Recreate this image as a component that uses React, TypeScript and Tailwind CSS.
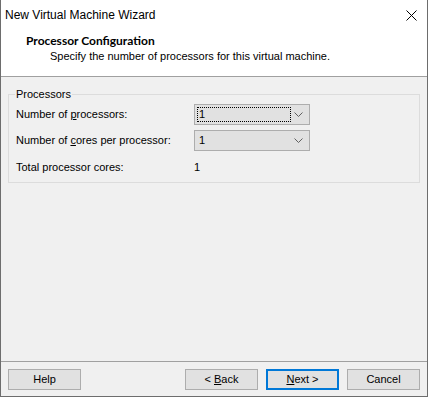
import React from 'react';

function Chevron() {
  return (
    <svg width="9" height="5" viewBox="0 0 9 5" className="text-[#606060]">
      <path d="M0.5 0.5 L4.5 4.5 L8.5 0.5" fill="none" stroke="currentColor" strokeWidth="1" />
    </svg>
  );
}

function Combo({ value, focused }: { value: string; focused?: boolean }) {
  return (
    <div className="flex h-[21px] w-[116px] items-center justify-between border border-[#adadad] bg-[#e1e1e1] pl-[2px] pr-[6px]">
      <div
        className={
          focused
            ? 'flex h-[15px] w-[94px] items-center border border-dotted border-black pl-[1px]'
            : 'flex h-[15px] w-[94px] items-center pl-[2px]'
        }
      >
        {value}
      </div>
      <Chevron />
    </div>
  );
}

function Button({ children, primary }: { children: React.ReactNode; primary?: boolean }) {
  return (
    <div
      className={
        primary
          ? 'flex h-[21px] w-[73px] items-center justify-center whitespace-pre border-2 border-[#0078d7] bg-[#e1e1e1]'
          : 'flex h-[21px] w-[73px] items-center justify-center whitespace-pre border border-[#adadad] bg-[#e1e1e1]'
      }
    >
      {children}
    </div>
  );
}

export default function App() {
  return (
    <div
      className="flex h-[397px] w-[428px] flex-col border-x border-b border-[#6d6d6d] bg-[#f0f0f0] text-[11.5px] leading-[15px] text-black"
      style={{ fontFamily: '"Liberation Sans", Arial, sans-serif' }}
    >
      {/* title bar */}
      <div className="flex h-[30px] items-center justify-between bg-white pl-[4px] pr-[10px]">
        <span className="text-[12px]">New Virtual Machine Wizard</span>
        <svg width="11" height="11" viewBox="0 0 11 11">
          <path d="M0.5 0.5 L10.5 10.5 M10.5 0.5 L0.5 10.5" stroke="#000" strokeWidth="1" />
        </svg>
      </div>

      {/* header */}
      <div className="flex h-[47px] flex-col border-b border-[#a0a0a0] bg-white pt-[3px]">
        <div className="pl-[25px] text-[12px] font-bold" style={{ fontFamily: 'Lato, sans-serif' }}>
          Processor Configuration
        </div>
        <div className="pl-[49px] pt-[1px] text-[11px]">Specify the number of processors for this virtual machine.</div>
      </div>

      {/* body */}
      <div className="flex-1 px-[7px] pt-[10px] text-[11px]">
        <fieldset className="h-[96px] border border-[#dcdcdc] px-[7px] pb-[8px]">
          <legend className="ml-[-1px] px-[1px]">Processors</legend>
          <div className="mt-[2px] flex items-center">
            <span className="w-[178px]">
              Number of <span className="underline">p</span>rocessors:
            </span>
            <Combo value="1" focused />
          </div>
          <div className="mt-[5px] flex items-center">
            <span className="w-[178px]">
              Number of <span className="underline">c</span>ores per processor:
            </span>
            <Combo value="1" />
          </div>
          <div className="mt-[9px] flex items-center">
            <span className="w-[178px]">Total processor cores:</span>
            <span>1</span>
          </div>
        </fieldset>
      </div>

      {/* footer */}
      <div className="mt-[1px] flex h-[35px] items-start border-t border-[#a0a0a0] px-[7px] pt-[7px] text-[11px]">
        <Button>Help</Button>
        <div className="ml-auto flex">
          <Button>
            {'< '}
            <span className="underline">B</span>ack
          </Button>
          <div className="ml-[8px]">
            <Button primary>
              <span className="underline">N</span>
              {'ext >'}
            </Button>
          </div>
          <div className="ml-[8px]">
            <Button>Cancel</Button>
          </div>
        </div>
      </div>
    </div>
  );
}
